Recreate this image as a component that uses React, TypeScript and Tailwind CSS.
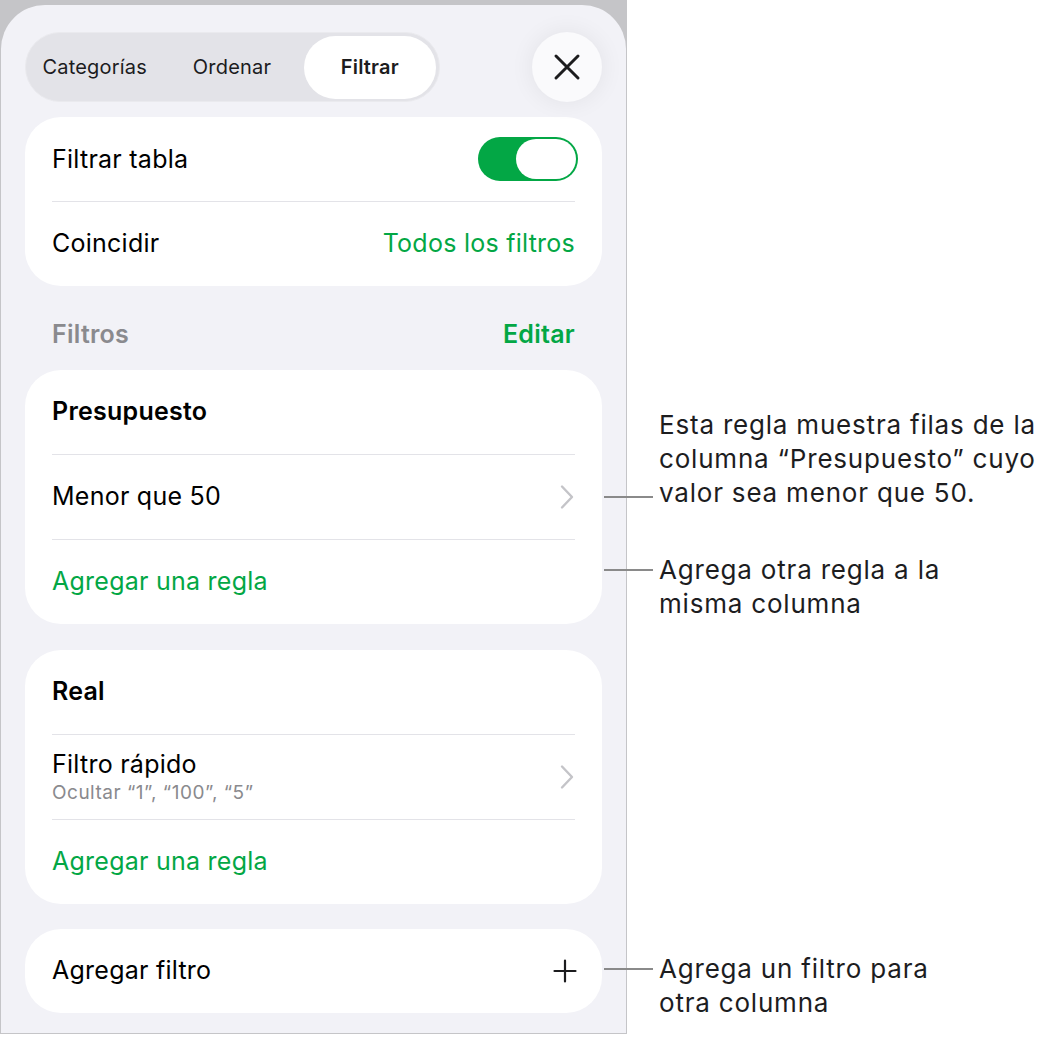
import { ReactNode } from 'react'

const font = { fontFamily: 'Inter, "Noto Sans", sans-serif' }

const Chevron = () => (
  <svg width="16" height="26" viewBox="0 0 16 26" fill="none">
    <path d="M3 2.5 L13 13 L3 23.5" stroke="#c4c4c8" strokeWidth="2.4" strokeLinecap="round" strokeLinejoin="round" />
  </svg>
)

const Plus = () => (
  <svg width="24" height="24" viewBox="0 0 24 24" fill="none">
    <path d="M12 1.5 V22.5 M1.5 12 H22.5" stroke="#1c1c1e" strokeWidth="2.2" strokeLinecap="round" />
  </svg>
)

const Card = ({ children }: { children: ReactNode }) => (
  <div className="bg-white rounded-[36px] px-[27px] text-[25px] tracking-[0.25px]">{children}</div>
)

const Sep = () => <div className="h-px bg-[#e3e3e8]" />

const Row = ({ children, className = '' }: { children: ReactNode; className?: string }) => (
  <div className={`relative h-[84px] flex items-center justify-between ${className}`}>{children}</div>
)

const Callout = ({ lines, className, lineAt }: { lines: string[]; className: string; lineAt: string }) => (
  <div className={`absolute left-full flex items-start ${className}`}>
    <div className={`w-[49px] h-[2px] bg-[#8a8a8a] ${lineAt}`} />
    <div className="ml-[6px] text-[26px] tracking-[0.8px] leading-[34px] text-[#1d1d1f] whitespace-nowrap">
      {lines.map((l) => (
        <div key={l}>{l}</div>
      ))}
    </div>
  </div>
)

const App = () => {
  return (
    <div className="min-h-screen bg-white" style={font}>
      <div className="w-[627px] h-[1034px] bg-[#c5c5c8] pt-[5px] px-px pb-px">
        <div className="h-full rounded-t-[44px] bg-[#f2f2f7] px-[24px] pt-[27px]">
          {/* top bar */}
          <div className="flex items-center justify-between">
            <div className="w-[415px] h-[70px] rounded-full bg-[#e3e3e8] border border-[#eaeaee] flex items-center px-[3px] text-[20px] tracking-[0.2px] text-[#1c1c1e]">
              <div className="w-[132px] text-center">Categorías</div>
              <div className="w-[144px] text-center">Ordenar</div>
              <div className="w-[133px] h-[63px] rounded-full bg-white flex items-center justify-center font-semibold">
                Filtrar
              </div>
            </div>
            <div className="w-[70px] h-[70px] rounded-full bg-[#fafafc] shadow-[0_0_24px_rgba(0,0,0,0.07)] flex items-center justify-center">
              <svg width="28" height="28" viewBox="0 0 28 28" fill="none">
                <path d="M3 3 L25 25 M25 3 L3 25" stroke="#1c1c1e" strokeWidth="3" strokeLinecap="round" />
              </svg>
            </div>
          </div>

          <div className="mt-[15px]">
            <Card>
              <Row>
                <span className="text-black pt-[2px]">Filtrar tabla</span>
                <div className="w-[100px] h-[44px] rounded-full bg-[#03a745] p-[2px] flex justify-end -mr-[3px]">
                  <div className="w-[60px] h-[40px] rounded-full bg-white" />
                </div>
              </Row>
              <Sep />
              <Row>
                <span className="text-black">Coincidir</span>
                <span className="text-[#03a745]">Todos los filtros</span>
              </Row>
            </Card>
          </div>

          <div className="h-[84px] pt-[14px] px-[27px] flex items-center justify-between text-[25px] tracking-[0.25px] font-semibold">
            <span className="text-[#8a8a8e]">Filtros</span>
            <span className="text-[#03a745]">Editar</span>
          </div>

          <Card>
            <Row>
              <span className="font-semibold text-black">Presupuesto</span>
            </Row>
            <Sep />
            <Row>
              <span className="text-black">Menor que 50</span>
              <Chevron />
              <Callout
                className="top-[-47px] ml-[29px]"
                lineAt="mt-[88px]"
                lines={['Esta regla muestra filas de la', 'columna “Presupuesto” cuyo', 'valor sea menor que 50.']}
              />
            </Row>
            <Sep />
            <Row>
              <span className="text-[#03a745]">Agregar una regla</span>
              <Callout className="top-[13px] ml-[29px]" lineAt="mt-[16px]" lines={['Agrega otra regla a la', 'misma columna']} />
            </Row>
          </Card>

          <div className="mt-[26px]">
            <Card>
              <Row>
                <span className="font-semibold text-black">Real</span>
              </Row>
              <Sep />
              <Row>
                <div className="flex flex-col">
                  <span className="leading-[30px] text-black">Filtro rápido</span>
                  <span className="text-[19px] tracking-[0.5px] leading-[24px] mt-[2px] text-[#8a8a8e]">
                    Ocultar “1”, “100”, “5”
                  </span>
                </div>
                <Chevron />
              </Row>
              <Sep />
              <Row>
                <span className="text-[#03a745]">Agregar una regla</span>
              </Row>
            </Card>
          </div>

          <div className="mt-[25px]">
            <Card>
              <Row>
                <span className="text-black">Agregar filtro</span>
                <div className="-mr-[2px]">
                  <Plus />
                </div>
                <Callout className="top-[23px] ml-[29px]" lineAt="mt-[16px]" lines={['Agrega un filtro para', 'otra columna']} />
              </Row>
            </Card>
          </div>
        </div>
      </div>
    </div>
  )
}

export default App
